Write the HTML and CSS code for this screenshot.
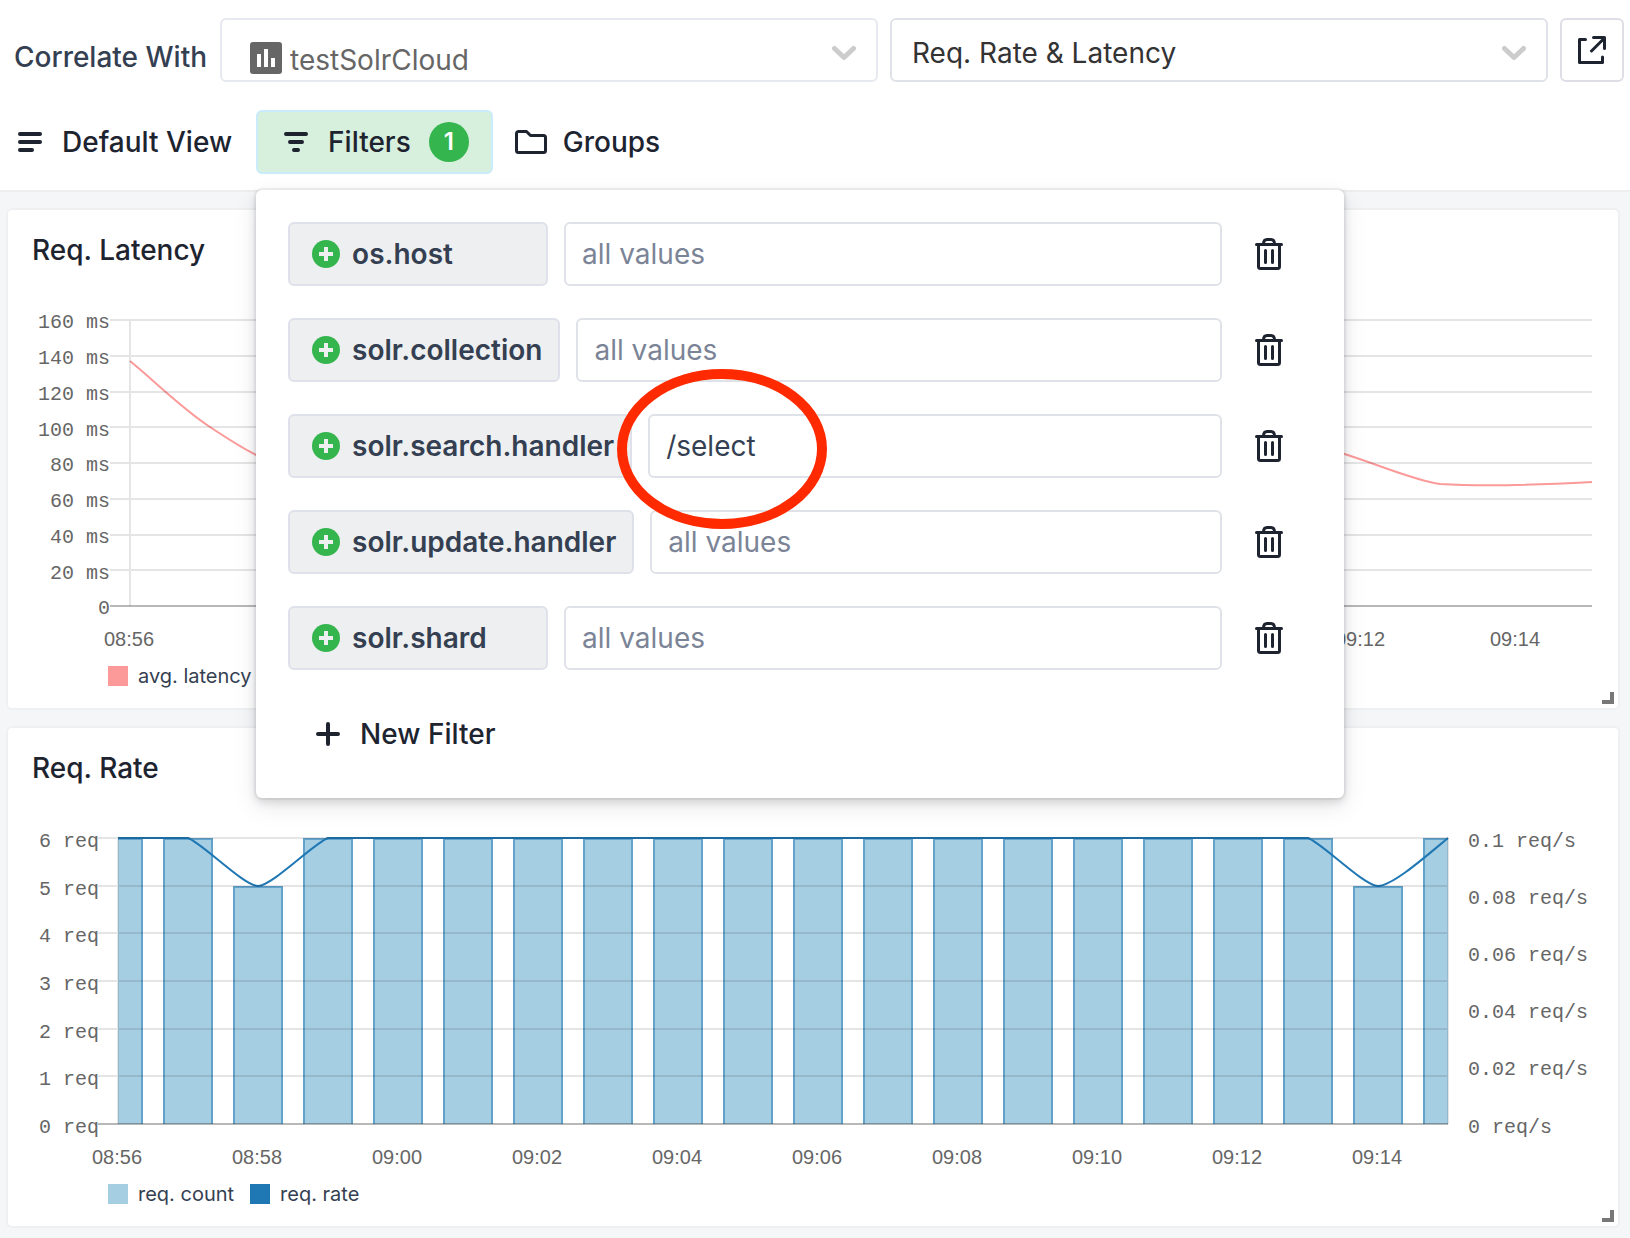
FILE: index.html
```html
<!DOCTYPE html>
<html lang="en">
<head>
<meta charset="utf-8">
<meta name="viewport" content="width=device-width, initial-scale=1">
<title>Req. Rate &amp; Latency</title>
<link rel="stylesheet" href="styles.css">
</head>
<body>
<svg class="sprite" aria-hidden="true">
  <symbol id="icon-trash" viewBox="0 0 28 32">
    <g fill="none" stroke="currentColor" stroke-width="3" stroke-linecap="round" stroke-linejoin="round">
      <path d="M1.500 6.500H26.500M3.500 6.500V28.500a2 2 0 0 0 2 2H22.500a2 2 0 0 0 2-2V6.500M8.500 6C8.500 3 10 1.500 12 1.500H16C18 1.500 19.500 3 19.500 6M10.500 12.500V24.500M17.500 12.500V24.500"/>
    </g>
  </symbol>
  <symbol id="icon-add" viewBox="0 0 28 28">
    <circle cx="14" cy="14" r="14" fill="#34b54e"/>
    <path d="M7 14H21M14 7V21" stroke="#eeeff1" stroke-width="4"/>
  </symbol>
  <symbol id="icon-chevron" viewBox="0 0 24 16">
    <path d="M2.500 3.500L12 12.500L21.500 3.500" fill="none" stroke="#ccc" stroke-width="5" stroke-linecap="round" stroke-linejoin="round"/>
  </symbol>
</svg>

<header class="header">
  <div class="correlate">
    <label class="correlate-label" for="app">Correlate With</label>
    <div class="select-box">
      <svg class="app-icon" viewBox="0 0 32 32" aria-hidden="true">
        <rect width="32" height="32" rx="3" fill="#666"/>
        <path d="M7 12h4v13h-4zM14 7h4v18h-4zM21 16h4v9h-4z" fill="#fff"/>
      </svg>
      <select class="select select-app" id="app"><option>testSolrCloud</option></select>
      <svg class="chevron"><use href="#icon-chevron"/></svg>
    </div>
    <div class="select-box">
      <select class="select" aria-label="Report"><option>Req. Rate &amp; Latency</option></select>
      <svg class="chevron"><use href="#icon-chevron"/></svg>
    </div>
    <button class="open-button" type="button" aria-label="Open in new window">
      <svg class="open-icon" viewBox="0 0 28 28" fill="none" stroke="currentColor" stroke-width="3" stroke-linecap="round" stroke-linejoin="round">
        <path d="M7.500 3.500H1.500V26.500H24.500V21M13.500 15L26.500 2M15.500 1.500H26.500V12.500"/>
      </svg>
    </button>
  </div>

  <nav class="toolbar">
    <button class="tool" type="button">
      <svg class="tool-icon" viewBox="0 0 24 20"><path d="M2 2H22M2 10H22M2 18H14" stroke="currentColor" stroke-width="4" stroke-linecap="round"/></svg>
      Default View
    </button>
    <div class="filters">
      <button class="tool tool-active" type="button" aria-expanded="true">
        <svg class="tool-icon" viewBox="0 0 24 20"><path d="M2 2H22M6 10H18M10 18H14" stroke="currentColor" stroke-width="4" stroke-linecap="round"/></svg>
        <span class="tool-text">Filters <span class="badge">1</span></span>
      </button>

      <div class="panel">
        <div class="filter">
          <button class="tag" type="button"><svg class="tag-icon"><use href="#icon-add"/></svg>os.host</button>
          <input class="values" type="text" placeholder="all values" aria-label="os.host">
          <button class="remove" type="button" aria-label="Remove os.host"><svg class="trash"><use href="#icon-trash"/></svg></button>
        </div>
        <div class="filter">
          <button class="tag" type="button"><svg class="tag-icon"><use href="#icon-add"/></svg>solr.collection</button>
          <input class="values" type="text" placeholder="all values" aria-label="solr.collection">
          <button class="remove" type="button" aria-label="Remove solr.collection"><svg class="trash"><use href="#icon-trash"/></svg></button>
        </div>
        <div class="filter">
          <button class="tag" type="button"><svg class="tag-icon"><use href="#icon-add"/></svg>solr.search.handler</button>
          <input class="values" type="text" value="/select" aria-label="solr.search.handler">
          <button class="remove" type="button" aria-label="Remove solr.search.handler"><svg class="trash"><use href="#icon-trash"/></svg></button>
        </div>
        <div class="filter">
          <button class="tag" type="button"><svg class="tag-icon"><use href="#icon-add"/></svg>solr.update.handler</button>
          <input class="values" type="text" placeholder="all values" aria-label="solr.update.handler">
          <button class="remove" type="button" aria-label="Remove solr.update.handler"><svg class="trash"><use href="#icon-trash"/></svg></button>
        </div>
        <div class="filter">
          <button class="tag" type="button"><svg class="tag-icon"><use href="#icon-add"/></svg>solr.shard</button>
          <input class="values" type="text" placeholder="all values" aria-label="solr.shard">
          <button class="remove" type="button" aria-label="Remove solr.shard"><svg class="trash"><use href="#icon-trash"/></svg></button>
        </div>
        <button class="new-filter" type="button">
          <svg class="plus" viewBox="0 0 24 24"><path d="M2 12H22M12 2V22" stroke="currentColor" stroke-width="4" stroke-linecap="round"/></svg>
          New Filter
        </button>
        <svg class="highlight" viewBox="0 0 210 160" aria-hidden="true"><ellipse cx="105" cy="80" rx="100" ry="75" fill="none" stroke="#ff2a00" stroke-width="10"/></svg>
      </div>
    </div>
    <button class="tool tool-groups" type="button">
      <svg class="folder" viewBox="0 0 32 24"><path d="M3.500 1.500H11.500L15.500 5.500H28.500a2 2 0 0 1 2 2V20.500a2 2 0 0 1-2 2H3.500a2 2 0 0 1-2-2V3.500a2 2 0 0 1 2-2Z" fill="none" stroke="currentColor" stroke-width="3" stroke-linejoin="round"/></svg>
      Groups
    </button>
  </nav>
</header>

<main class="reports">
  <section class="card">
    <h2 class="card-title">Req. Latency</h2>
    <svg class="chart" viewBox="0 0 1610 370" role="img" aria-label="Average request latency">
      <path class="line line-latency" d="M122 71C150 94 172 117 202 137C220 149 234 158 250 166L1330 162C1370 174 1404 190 1432 194C1480 197 1530 195 1584 192"/>
      <path class="grid" d="M102 30H1584M102 66H1584M102 102H1584M102 137H1584M102 173H1584M102 209H1584M102 245H1584M102 280H1584M122 30V316"/>
      <path class="axis" d="M102 316H1584"/>
      <g class="value end">
        <text x="102" y="38">160 ms</text>
        <text x="102" y="74">140 ms</text>
        <text x="102" y="110">120 ms</text>
        <text x="102" y="146">100 ms</text>
        <text x="102" y="181">80 ms</text>
        <text x="102" y="217">60 ms</text>
        <text x="102" y="253">40 ms</text>
        <text x="102" y="289">20 ms</text>
        <text x="102" y="324">0</text>
      </g>
      <g class="time">
        <text x="121" y="356">08:56</text>
        <text x="1352" y="356">09:12</text>
        <text x="1507" y="356">09:14</text>
      </g>
    </svg>
    <ul class="legend">
      <li class="legend-item"><span class="swatch swatch-latency"></span>avg. latency</li>
    </ul>
    <span class="resize"></span>
  </section>

  <section class="card">
    <h2 class="card-title">Req. Rate</h2>
    <svg class="chart" viewBox="0 0 1610 370" role="img" aria-label="Request count and rate">
      <path class="bar" d="M110 30H135V316H110ZM155 30H205V316H155ZM225 78H275V316H225ZM295 30H345V316H295ZM365 30H415V316H365ZM435 30H485V316H435ZM505 30H555V316H505ZM575 30H625V316H575ZM645 30H695V316H645ZM715 30H765V316H715ZM785 30H835V316H785ZM855 30H905V316H855ZM925 30H975V316H925ZM995 30H1045V316H995ZM1065 30H1115V316H1065ZM1135 30H1185V316H1135ZM1205 30H1255V316H1205ZM1275 30H1325V316H1275ZM1345 78H1395V316H1345ZM1415 30H1440V316H1415Z"/>
      <path class="bar-edge" d="M110 31H134V316M156 316V31H204V316M226 316V79H274V316M296 316V31H344V316M366 316V31H414V316M436 316V31H484V316M506 316V31H554V316M576 316V31H624V316M646 316V31H694V316M716 316V31H764V316M786 316V31H834V316M856 316V31H904V316M926 316V31H974V316M996 316V31H1044V316M1066 316V31H1114V316M1136 316V31H1184V316M1206 316V31H1254V316M1276 316V31H1324V316M1346 316V79H1394V316M1416 316V31H1440"/>
      <path class="line line-rate" d="M110 30H180C194 35 236 78 250 78C264 78 306 35 320 30H1300C1314 35 1356 78 1370 78C1384 78 1416 50 1440 30"/>
      <path class="grid" d="M90 30H1440M90 78H1440M90 125H1440M90 173H1440M90 221H1440M90 268H1440M110 30V316M1440 30V316"/>
      <path class="axis" d="M90 316H1440"/>
      <g class="value end">
        <text x="91" y="39">6 req</text>
        <text x="91" y="87">5 req</text>
        <text x="91" y="134">4 req</text>
        <text x="91" y="182">3 req</text>
        <text x="91" y="230">2 req</text>
        <text x="91" y="277">1 req</text>
        <text x="91" y="325">0 req</text>
      </g>
      <g class="value">
        <text x="1460" y="39">0.1 req/s</text>
        <text x="1460" y="96">0.08 req/s</text>
        <text x="1460" y="153">0.06 req/s</text>
        <text x="1460" y="210">0.04 req/s</text>
        <text x="1460" y="267">0.02 req/s</text>
        <text x="1460" y="325">0 req/s</text>
      </g>
      <g class="time">
        <text x="109" y="356">08:56</text>
        <text x="249" y="356">08:58</text>
        <text x="389" y="356">09:00</text>
        <text x="529" y="356">09:02</text>
        <text x="669" y="356">09:04</text>
        <text x="809" y="356">09:06</text>
        <text x="949" y="356">09:08</text>
        <text x="1089" y="356">09:10</text>
        <text x="1229" y="356">09:12</text>
        <text x="1369" y="356">09:14</text>
      </g>
    </svg>
    <ul class="legend">
      <li class="legend-item"><span class="swatch swatch-count"></span>req. count</li>
      <li class="legend-item"><span class="swatch swatch-rate"></span>req. rate</li>
    </ul>
    <span class="resize"></span>
  </section>
</main>
</body>
</html>
```

FILE: styles.css
```css
* { box-sizing: border-box; }

body {
  margin: 0;
  background: #f5f6f8;
  color: #1d2430;
  font: 28px/32px Inter, "Liberation Sans", sans-serif;
}

button, input, select { font: inherit; color: inherit; }

button {
  display: flex;
  align-items: center;
  flex: none;
  margin: 0;
  border: 0;
  background: none;
  font-weight: 500;
  white-space: nowrap;
}

svg { display: block; flex: none; }
.sprite { position: absolute; width: 0; height: 0; }

/* Header */
.header {
  background: #fff;
  border-bottom: 2px solid #eceef0;
  padding-bottom: 16px;
}

.correlate {
  display: flex;
  align-items: center;
  gap: 12px;
  padding: 18px 6px 28px 14px;
}

.correlate-label {
  flex: none;
  width: 194px;
  padding-top: 14px;
  color: #353f52;
  font-weight: 500;
  white-space: nowrap;
}

.select-box { position: relative; flex: 1; min-width: 0; }

.select {
  display: block;
  width: 100%;
  height: 64px;
  padding: 6px 64px 0 20px;
  appearance: none;
  background: #fff;
  border: 2px solid #dfe2e8;
  border-radius: 6px;
  color: #333;
}

.select-app {
  padding: 20px 64px 0 68px;
  border-color: #e6e9ef;
  color: #666;
}

.app-icon { position: absolute; left: 30px; top: 24px; width: 32px; height: 32px; }
.chevron { position: absolute; right: 22px; top: 27px; width: 24px; height: 16px; pointer-events: none; }

.open-button {
  justify-content: center;
  width: 64px;
  height: 64px;
  padding: 0;
  border: 2px solid #dfdee6;
  border-radius: 6px;
}
.open-icon { width: 28px; height: 28px; }

/* Toolbar */
.toolbar { display: flex; }

.tool { height: 64px; gap: 20px; padding: 0 24px 0 18px; }
.tool-icon { width: 24px; height: 20px; }
.tool-text { display: flex; align-items: center; gap: 18px; }

.tool-active {
  padding: 0 22px 0 26px;
  background: #d7efdd;
  border: 2px solid #c9ebfa;
  border-radius: 6px;
}
.tool-groups { gap: 16px; padding: 0 22px; }
.folder { width: 32px; height: 24px; }

.badge {
  width: 40px;
  height: 40px;
  border-radius: 50%;
  background: #34b54e;
  color: #fff;
  font-size: 24px;
  font-weight: 600;
  line-height: 40px;
  text-align: center;
}

/* Filter drop-down */
.filters { position: relative; }

.panel {
  position: absolute;
  z-index: 1;
  top: 80px;
  left: 0;
  display: flex;
  flex-direction: column;
  gap: 32px;
  width: calc(100vw - 542px);
  padding: 32px;
  background: #fff;
  border-radius: 6px;
  box-shadow: 0 0 0 2px rgba(16, 22, 26, 0.05), 0 4px 8px rgba(16, 22, 26, 0.14), 0 8px 24px rgba(16, 22, 26, 0.1);
}

.filter { display: flex; gap: 16px; }

.tag {
  gap: 12px;
  min-width: 260px;
  height: 64px;
  padding: 0 16px 0 22px;
  background: #eeeff1;
  border: 2px solid #dfe1ea;
  border-radius: 6px;
  color: #353f52;
  font-weight: 600;
}
.tag-icon { width: 28px; height: 28px; }

.values {
  flex: 1;
  min-width: 0;
  height: 64px;
  padding: 0 16px;
  background: #fff;
  border: 2px solid #dfe2e8;
  border-radius: 6px;
  color: #353f52;
}
.values::placeholder { color: #7b8496; opacity: 1; }

.remove { justify-content: center; width: 62px; height: 64px; margin-right: 12px; padding: 0; }
.trash { width: 28px; height: 32px; }

.new-filter { align-self: flex-start; gap: 20px; height: 64px; padding: 0 28px; }
.plus { width: 24px; height: 24px; }

.highlight { position: absolute; left: 361px; top: 179px; width: 210px; height: 160px; pointer-events: none; }

/* Report cards */
.reports {
  display: flex;
  flex-direction: column;
  gap: 16px;
  padding: 16px 10px 10px 6px;
}

.card {
  position: relative;
  background: #fff;
  border: 2px solid #eef0f2;
  border-radius: 6px;
}

.card-title { margin: 0; padding: 24px; font-size: 28px; line-height: 32px; font-weight: 500; }

.chart { width: 100%; height: auto; }
.chart path { fill: none; stroke-width: 2; }
.chart .bar { fill: #a6cee3; }
.chart .bar-edge { stroke: rgba(31, 120, 180, 0.5); }
.chart .grid { stroke: rgba(0, 0, 0, 0.1); }
.chart .axis { stroke: rgba(0, 0, 0, 0.28); }
.chart .line-latency { stroke: #fb9a99; }
.chart .line-rate { stroke: #1f78b4; }

.value { fill: #666; font: 20px "Liberation Mono", monospace; }
.end { text-anchor: end; }
.time { fill: #666; font: 20px "Liberation Sans", sans-serif; text-anchor: middle; }

.legend {
  display: flex;
  gap: 16px;
  margin: 0;
  padding: 6px 100px 22px;
  list-style: none;
  color: #353f52;
  font-size: 20px;
  line-height: 20px;
}
.legend-item { display: flex; gap: 10px; }
.swatch { width: 20px; height: 20px; }
.swatch-latency { background: #fb9a99; }
.swatch-count { background: #a6cee3; }
.swatch-rate { background: #1f78b4; }

.resize {
  position: absolute;
  right: 4px;
  bottom: 4px;
  width: 12px;
  height: 12px;
  border: solid #777;
  border-width: 0 4px 4px 0;
}
```
